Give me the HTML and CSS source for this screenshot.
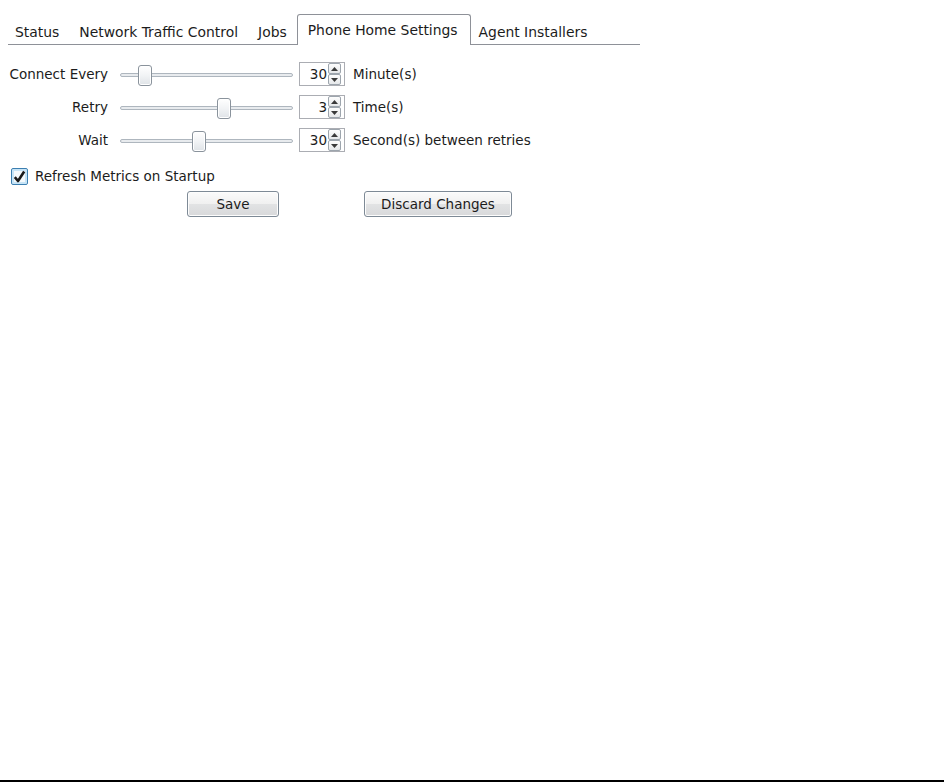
FILE: index.html
```html
<!DOCTYPE html>
<html lang="en">

<head>
  <meta charset="UTF-8">
  <meta name="viewport" content="width=device-width, initial-scale=1.0">
  <link rel="stylesheet" href="styles.css">
  <title>Phone Home Settings</title>
</head>

<body>
  <div class="window">
    <div class="tabs">
      <div class="tab first">Status</div>
      <div class="tab">Network Traffic Control</div>
      <div class="tab">Jobs</div>
      <div class="tab active">Phone Home Settings</div>
      <div class="tab">Agent Installers</div>
    </div>

    <div class="settings">
      <div class="row">
        <div class="label">Connect Every</div>
        <div class="slider">
          <div class="track"></div>
          <div class="thumb" style="left: 18px"></div>
        </div>
        <div class="spin">
          <span class="value">30</span>
          <div class="spinBtns">
            <span class="spinBtn"><svg width="7" height="4" viewBox="0 0 7 4"><polygon points="0,4 7,4 3.5,0" fill="#3a3a3a"/></svg></span>
            <span class="spinBtn"><svg width="7" height="4" viewBox="0 0 7 4"><polygon points="0,0 7,0 3.5,4" fill="#3a3a3a"/></svg></span>
          </div>
        </div>
        <div class="unit">Minute(s)</div>
      </div>

      <div class="row">
        <div class="label">Retry</div>
        <div class="slider">
          <div class="track"></div>
          <div class="thumb" style="left: 97px"></div>
        </div>
        <div class="spin">
          <span class="value">3</span>
          <div class="spinBtns">
            <span class="spinBtn"><svg width="7" height="4" viewBox="0 0 7 4"><polygon points="0,4 7,4 3.5,0" fill="#3a3a3a"/></svg></span>
            <span class="spinBtn"><svg width="7" height="4" viewBox="0 0 7 4"><polygon points="0,0 7,0 3.5,4" fill="#3a3a3a"/></svg></span>
          </div>
        </div>
        <div class="unit">Time(s)</div>
      </div>

      <div class="row">
        <div class="label">Wait</div>
        <div class="slider">
          <div class="track"></div>
          <div class="thumb" style="left: 72px"></div>
        </div>
        <div class="spin">
          <span class="value">30</span>
          <div class="spinBtns">
            <span class="spinBtn"><svg width="7" height="4" viewBox="0 0 7 4"><polygon points="0,4 7,4 3.5,0" fill="#3a3a3a"/></svg></span>
            <span class="spinBtn"><svg width="7" height="4" viewBox="0 0 7 4"><polygon points="0,0 7,0 3.5,4" fill="#3a3a3a"/></svg></span>
          </div>
        </div>
        <div class="unit">Second(s) between retries</div>
      </div>
    </div>

    <label class="check">
      <span class="checkBox">
        <svg width="13" height="13" viewBox="0 0 13 13"><path d="M1.8 7.2 L5 11 L11.2 1.5" fill="none" stroke="#1a1a1a" stroke-width="2.6" stroke-linejoin="round"/></svg>
      </span>
      <span>Refresh Metrics on Startup</span>
    </label>

    <div class="actions">
      <button class="btn save">Save</button>
      <button class="btn discard">Discard Changes</button>
    </div>
  </div>
</body>

</html>
```

FILE: styles.css
```css
* {
  margin: 0;
  padding: 0;
  box-sizing: border-box;
}

body {
  font-family: "DejaVu Sans", Verdana, sans-serif;
  font-size: 13.5px;
  color: #1c1c1c;
  background-color: #fff;
}

.window {
  height: 782px;
  padding-top: 14px;
  border-bottom: 2px solid #000;
}

/* tab strip */
.tabs {
  display: flex;
  align-items: flex-start;
  width: 632px;
  height: 31px;
  margin-left: 8px;
  font-size: 13.9px;
  border-bottom: 1px solid #8e9198;
}

.tabs .tab {
  display: flex;
  align-items: center;
  height: 25px;
  margin-top: 5px;
  padding: 0 10px;
  white-space: nowrap;
}

.tabs .first {
  margin-left: -3px;
}

.tabs .active {
  position: relative;
  height: 31px;
  margin: 0 -2px 0 0;
  padding: 0 12px 1px 10px;
  background-color: #fff;
  border: 1px solid #8e9198;
  border-bottom: none;
  border-radius: 3px 3px 0 0;
}

/* slider rows */
.settings {
  margin-top: 17px;
  padding-left: 8px;
}

.settings .row {
  display: flex;
  align-items: center;
  height: 24px;
  margin-bottom: 9px;
}

.settings .label {
  width: 100px;
  margin-right: 12px;
  text-align: right;
}

.settings .slider {
  position: relative;
  width: 173px;
  height: 24px;
  margin-right: 6px;
  padding-top: 11px;
}

.settings .track {
  height: 4px;
  background-color: #e8ebee;
  border: 1px solid #aeb6be;
  border-radius: 2px;
}

.settings .thumb {
  position: absolute;
  top: 3px;
  width: 14px;
  height: 21px;
  border: 1px solid #8a939c;
  border-radius: 3px;
  background: linear-gradient(#ffffff, #f1f3f5 50%, #dfe3e7);
  box-shadow: inset 0 0 0 1px #fff;
}

.settings .spin {
  display: flex;
  align-items: center;
  justify-content: flex-end;
  width: 46px;
  height: 24px;
  margin-right: 8px;
  padding-right: 3px;
  border: 1px solid #abadb3;
  background-color: #fff;
}

.settings .value {
  margin-right: 1px;
}

.settings .spinBtns {
  display: flex;
  flex-direction: column;
  width: 13px;
}

.settings .spinBtn {
  display: flex;
  align-items: center;
  justify-content: center;
  height: 11px;
  border: 1px solid #9da5ad;
  border-radius: 2px;
  background: linear-gradient(#fdfdfd, #e6e8ea);
}

/* checkbox */
.check {
  display: flex;
  align-items: center;
  height: 18px;
  margin: 15px 0 0 11px;
}

.check .checkBox {
  display: flex;
  align-items: center;
  justify-content: center;
  width: 17px;
  height: 17px;
  margin-right: 7px;
  border: 1px solid #3c7fb1;
  border-radius: 2px;
  background-color: #f4f9fc;
  box-shadow: inset 0 0 0 2px #c7e4f6;
}

/* buttons */
.actions {
  display: flex;
  margin-top: 6px;
  padding-left: 187px;
}

.actions .btn {
  height: 26px;
  font-family: inherit;
  font-size: inherit;
  color: #1c1c1c;
  border: 1px solid #7e8a96;
  border-radius: 3px;
  background: linear-gradient(#fbfbfb, #f0f0f0 50%, #e2e3e4 51%, #d8d9db);
  box-shadow: inset 0 0 0 1px #fdfdfd;
}

.actions .save {
  width: 92px;
  margin-right: 85px;
}

.actions .discard {
  width: 148px;
}
```
